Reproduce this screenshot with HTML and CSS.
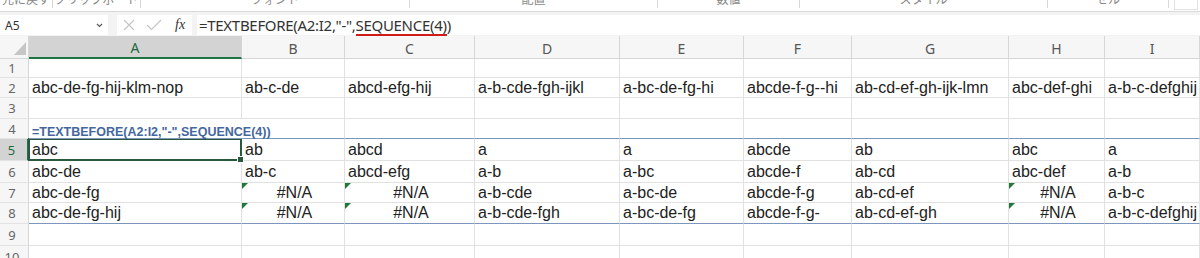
FILE: index.html
```html
<!DOCTYPE html>
<html lang="ja">

<head>
    <meta charset="UTF-8" />
    <meta name="viewport" content="width=device-width, initial-scale=1.0" />
    <title>TEXTBEFORE</title>
    <link rel="stylesheet" href="styles.css">
</head>

<body>
    <!-- ribbon group labels (only the bottom edge is visible) -->
    <div class="ribbon">
        <div class="ribbon-group undo"><span>元に戻す</span></div>
        <div class="ribbon-group clipboard"><span>クリップボード</span></div>
        <div class="ribbon-group font"><span>フォント</span></div>
        <div class="ribbon-group align"><span>配置</span></div>
        <div class="ribbon-group number"><span>数値</span></div>
        <div class="ribbon-group style"><span>スタイル</span></div>
        <div class="ribbon-group cells"><span>セル</span></div>
        <div class="ribbon-end"><div class="ribbon-box"></div></div>
    </div>

    <div class="formula-bar">
        <div class="name-box">
            <span>A5</span>
            <svg width="7" height="5" viewBox="0 0 7 5"><path d="M1 1 L3.5 3.5 L6 1" fill="none" stroke="#555" stroke-width="1.1" /></svg>
        </div>
        <div class="fx-buttons">
            <svg width="12" height="12" viewBox="0 0 12 12"><path d="M1 1 L11 11 M11 1 L1 11" stroke="#c4c4c4" stroke-width="1.1" /></svg>
            <svg width="16" height="12" viewBox="0 0 16 12"><path d="M1 6 L5.5 10.5 L15 1" fill="none" stroke="#c4c4c4" stroke-width="1.1" /></svg>
            <span class="fx">fx</span>
        </div>
        <div class="formula-input">=TEXTBEFORE(A2:I2,"-",<span class="marked">SEQUENCE(4)</span>)</div>
    </div>

    <div class="sheet">
        <!-- header row -->
        <div class="corner"><div class="corner-tri"></div></div>
        <div class="ch selected">A</div>
        <div class="ch">B</div>
        <div class="ch">C</div>
        <div class="ch">D</div>
        <div class="ch">E</div>
        <div class="ch">F</div>
        <div class="ch">G</div>
        <div class="ch">H</div>
        <div class="ch">I</div>

        <!-- row 1 -->
        <div class="rh">1</div>
        <div class="c"></div><div class="c"></div><div class="c"></div><div class="c"></div><div class="c"></div>
        <div class="c"></div><div class="c"></div><div class="c"></div><div class="c"></div>

        <!-- row 2 -->
        <div class="rh">2</div>
        <div class="c">abc-de-fg-hij-klm-nop</div>
        <div class="c">ab-c-de</div>
        <div class="c">abcd-efg-hij</div>
        <div class="c">a-b-cde-fgh-ijkl</div>
        <div class="c">a-bc-de-fg-hi</div>
        <div class="c">abcde-f-g--hi</div>
        <div class="c">ab-cd-ef-gh-ijk-lmn</div>
        <div class="c">abc-def-ghi</div>
        <div class="c">a-b-c-defghij</div>

        <!-- row 3 -->
        <div class="rh">3</div>
        <div class="c"></div><div class="c"></div><div class="c"></div><div class="c"></div><div class="c"></div>
        <div class="c"></div><div class="c"></div><div class="c"></div><div class="c"></div>

        <!-- row 4 -->
        <div class="rh">4</div>
        <div class="c note above-spill">=TEXTBEFORE(A2:I2,"-",SEQUENCE(4))</div>
        <div class="c above-spill"></div><div class="c above-spill"></div><div class="c above-spill"></div>
        <div class="c above-spill"></div><div class="c above-spill"></div><div class="c above-spill"></div>
        <div class="c above-spill"></div><div class="c above-spill"></div>

        <!-- row 5 -->
        <div class="rh selected">5</div>
        <div class="c active">abc</div>
        <div class="c">ab</div>
        <div class="c">abcd</div>
        <div class="c">a</div>
        <div class="c">a</div>
        <div class="c">abcde</div>
        <div class="c">ab</div>
        <div class="c">abc</div>
        <div class="c">a</div>

        <!-- row 6 -->
        <div class="rh">6</div>
        <div class="c">abc-de</div>
        <div class="c">ab-c</div>
        <div class="c">abcd-efg</div>
        <div class="c">a-b</div>
        <div class="c">a-bc</div>
        <div class="c">abcde-f</div>
        <div class="c">ab-cd</div>
        <div class="c">abc-def</div>
        <div class="c">a-b</div>

        <!-- row 7 -->
        <div class="rh">7</div>
        <div class="c">abc-de-fg</div>
        <div class="c err">#N/A</div>
        <div class="c err">#N/A</div>
        <div class="c">a-b-cde</div>
        <div class="c">a-bc-de</div>
        <div class="c">abcde-f-g</div>
        <div class="c">ab-cd-ef</div>
        <div class="c err">#N/A</div>
        <div class="c">a-b-c</div>

        <!-- row 8 -->
        <div class="rh">8</div>
        <div class="c spill-end">abc-de-fg-hij</div>
        <div class="c spill-end err">#N/A</div>
        <div class="c spill-end err">#N/A</div>
        <div class="c spill-end">a-b-cde-fgh</div>
        <div class="c spill-end">a-bc-de-fg</div>
        <div class="c spill-end">abcde-f-g-</div>
        <div class="c spill-end">ab-cd-ef-gh</div>
        <div class="c spill-end err">#N/A</div>
        <div class="c spill-end">a-b-c-defghij</div>

        <!-- row 9 -->
        <div class="rh">9</div>
        <div class="c"></div><div class="c"></div><div class="c"></div><div class="c"></div><div class="c"></div>
        <div class="c"></div><div class="c"></div><div class="c"></div><div class="c"></div>

        <!-- row 10 -->
        <div class="rh">10</div>
        <div class="c"></div><div class="c"></div><div class="c"></div><div class="c"></div><div class="c"></div>
        <div class="c"></div><div class="c"></div><div class="c"></div><div class="c"></div>
    </div>
</body>

</html>
```

FILE: styles.css
```css
/* Base Styles */
body {
    margin: 0;
    background-color: #fff;
    font-family: "Liberation Sans", Arial, sans-serif;
    overflow: hidden;
}

/* Ribbon strip */
.ribbon {
    display: flex;
    height: 12px;
    border-bottom: 1px solid #dadada;
    box-shadow: 0 1px 2px rgba(0, 0, 0, 0.06);
    background-color: #fff;
    box-sizing: border-box;
    overflow: hidden;
}

.ribbon-group {
    flex: none;
    height: 8px;
    border-right: 1px solid #d8d8d8;
    box-sizing: border-box;
    text-align: center;
    overflow: hidden;
}

.ribbon-group span {
    display: block;
    margin-top: -7px;
    font-family: "Noto Sans CJK JP", "Noto Sans", sans-serif;
    font-size: 12px;
    line-height: 12px;
    color: #888;
}

.undo { width: 53px; }
.clipboard { width: 88px; }
.font { width: 269px; }
.align { width: 248px; }
.number { width: 142px; }
.style { width: 248px; }
.cells { width: 121px; }

.ribbon-end {
    flex: 1;
    padding-left: 5px;
}

.ribbon-box {
    width: 22px;
    height: 9px;
    border: 1px solid #e2e2e2;
    border-top: none;
}

/* Formula bar */
.formula-bar {
    display: flex;
    height: 24px;
    padding: 3px 0 1px;
    background-color: #f3f3f3;
    box-sizing: border-box;
}

.name-box {
    width: 108px;
    display: flex;
    align-items: center;
    justify-content: space-between;
    padding: 0 5px;
    background-color: #fff;
    box-sizing: border-box;
    font-family: "Noto Sans", sans-serif;
    font-size: 12px;
    color: #333;
}

.fx-buttons {
    width: 75px;
    margin-left: 9px;
    display: flex;
    align-items: center;
    gap: 11px;
    padding-left: 6px;
    background-color: #fff;
    box-sizing: border-box;
}

.fx {
    margin-left: 2px;
    font-family: "Liberation Serif", serif;
    font-style: italic;
    font-size: 14px;
    color: #333;
}

.formula-input {
    flex: 1;
    margin-left: 5px;
    padding-left: 2px;
    background-color: #fff;
    font-family: "Noto Sans", sans-serif;
    font-size: 15px;
    letter-spacing: -0.3px;
    line-height: 20px;
    color: #333;
    white-space: nowrap;
}

/* red hand-drawn underline */
.marked {
    display: inline-block;
    line-height: 15px;
    padding-bottom: 1px;
    border-bottom: 2px solid #d11a1a;
}

/* Sheet grid */
.sheet {
    display: grid;
    grid-template-columns: 29px 213px 103px 130px 145px 124px 108px 157px 96px 95px;
    grid-template-rows: 23px 19px 20px 21px 20px 22px 22px 20px 21px 22px 22px;
}

.corner {
    display: flex;
    align-items: flex-end;
    justify-content: flex-end;
    padding: 0 2px 3px 0;
    background-color: #f6f6f6;
    border-right: 1px solid #d6d6d6;
    border-bottom: 1px solid #d6d6d6;
    box-sizing: border-box;
}

.corner-tri {
    width: 0;
    height: 0;
    border-left: 12px solid transparent;
    border-bottom: 13px solid #c6c6c6;
}

.ch {
    display: flex;
    align-items: center;
    justify-content: center;
    padding-top: 2px;
    background-color: #f6f6f6;
    border-right: 1px solid #d6d6d6;
    border-bottom: 1px solid #d6d6d6;
    box-sizing: border-box;
    font-family: "Noto Sans", sans-serif;
    font-size: 14px;
    color: #555;
}

.ch.selected {
    background-color: #d3d3d3;
    border-bottom: 2px solid #217346;
    color: #1e6b41;
}

.rh {
    display: flex;
    align-items: center;
    justify-content: center;
    padding-right: 4px;
    background-color: #f6f6f6;
    border-right: 1px solid #d6d6d6;
    border-bottom: 1px solid #e3e3e3;
    box-sizing: border-box;
    font-family: "Noto Sans", sans-serif;
    font-size: 13px;
    color: #666;
}

.rh.selected {
    background-color: #d3d3d3;
    border-right: 2px solid #217346;
    color: #1e6b41;
}

.c {
    position: relative;
    display: flex;
    align-items: center;
    padding-left: 3px;
    border-right: 1px solid #e1e1e1;
    border-bottom: 1px solid #e1e1e1;
    box-sizing: border-box;
    font-size: 16px;
    color: #222;
    white-space: nowrap;
    overflow: hidden;
}

.c.note {
    overflow: visible;
    align-items: flex-end;
    border-right: none;
    font-weight: bold;
    font-size: 12.5px;
    line-height: 12px;
    color: #44679f;
    z-index: 1;
}

.above-spill {
    border-bottom-color: #7d96bd;
}

.spill-end {
    border-bottom-color: #7d96bd;
}

.c.err {
    justify-content: center;
}

/* green error indicator */
.c.err::before {
    content: "";
    position: absolute;
    top: 0;
    left: 0;
    border-top: 6px solid #1f7a3a;
    border-right: 6px solid transparent;
}

.c.active {
    overflow: visible;
}

/* selection box around A5 */
.c.active::before {
    content: "";
    position: absolute;
    top: -1px;
    left: -1px;
    right: -1px;
    bottom: -1px;
    border: 2px solid #29583d;
}

/* fill handle */
.c.active::after {
    content: "";
    position: absolute;
    right: -3px;
    bottom: -3px;
    width: 5px;
    height: 5px;
    background-color: #29583d;
    border: 1px solid #fff;
    z-index: 2;
}
```
